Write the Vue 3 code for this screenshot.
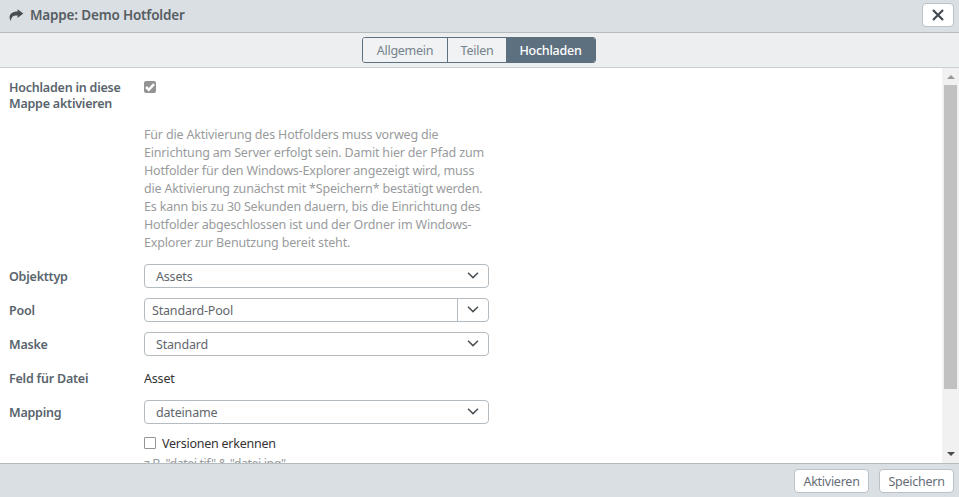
<script setup>
import { ref } from 'vue'

const tabs = ['Allgemein', 'Teilen', 'Hochladen']
const active = ref('Hochladen')
const help = [
  'Für die Aktivierung des Hotfolders muss vorweg die',
  'Einrichtung am Server erfolgt sein. Damit hier der Pfad zum',
  'Hotfolder für den Windows-Explorer angezeigt wird, muss',
  'die Aktivierung zunächst mit *Speichern* bestätigt werden.',
  'Es kann bis zu 30 Sekunden dauern, bis die Einrichtung des',
  'Hotfolder abgeschlossen ist und der Ordner im Windows-',
  'Explorer zur Benutzung bereit steht.',
]
const rows = [
  { label: 'Objekttyp', value: 'Assets', kind: 'select' },
  { label: 'Pool', value: 'Standard-Pool', kind: 'combo' },
  { label: 'Maske', value: 'Standard', kind: 'select' },
  { label: 'Feld für Datei', value: 'Asset', kind: 'text' },
  { label: 'Mapping', value: 'dateiname', kind: 'select' },
]
</script>

<template>
  <div class="dialog">
    <header class="titlebar">
      <svg class="share" width="15" height="13" viewBox="0 0 15 13">
        <path d="M8.6 0.2 L14.3 4.6 L8.6 9 V6.5 C5 6.3 2.4 7.2 1.9 12 C-1.2 7.6 1.2 2.6 8.6 2.6 Z" />
      </svg>
      <h1>Mappe: Demo Hotfolder</h1>
      <button class="close" aria-label="Schließen">
        <svg width="12" height="12" viewBox="0 0 12 12"><path d="M1 1 L11 11 M11 1 L1 11" /></svg>
      </button>
    </header>

    <nav class="tabbar">
      <div class="tabs">
        <button
          v-for="t in tabs"
          :key="t"
          :class="['tab', t.toLowerCase(), { active: t === active }]"
          @click="active = t"
        >{{ t }}</button>
      </div>
    </nav>

    <main class="body">
      <div class="form">
        <div class="row first">
          <label class="label wrap">Hochladen in diese<br />Mappe aktivieren</label>
          <span class="check on">
            <svg width="12" height="12" viewBox="0 0 12 12"><path d="M2 6 L4.8 8.8 L10 3.2" /></svg>
          </span>
        </div>
        <div class="help"><div v-for="line in help" :key="line">{{ line }}</div></div>
        <div v-for="r in rows" :key="r.label" class="row field">
          <label class="label">{{ r.label }}</label>
          <div v-if="r.kind === 'text'" class="plain">{{ r.value }}</div>
          <div v-else :class="['box', r.kind]">
            <span class="value">{{ r.value }}</span>
            <span class="arrow">
              <svg width="12" height="7" viewBox="0 0 12 7"><path d="M1 0.8 L6 5.6 L11 0.8" /></svg>
            </span>
          </div>
        </div>
        <div class="versions"><span class="check"></span><span>Versionen erkennen</span></div>
        <div class="hint">z.B. "datei.tif" &amp; "datei.jpg"</div>
      </div>
      <div class="scrollbar">
        <span class="up"></span>
        <span class="thumb"></span>
        <span class="down"></span>
      </div>
    </main>

    <footer class="footer">
      <button class="btn activate">Aktivieren</button>
      <button class="btn save">Speichern</button>
    </footer>
  </div>
</template>

<style>
body { margin: 0; overflow: hidden; }
</style>

<style scoped>
* { box-sizing: border-box; }
.dialog {
  width: 959px;
  height: 497px;
  display: flex;
  flex-direction: column;
  font-family: "Noto Sans", "Open Sans", sans-serif;
  font-size: 12.5px;
  letter-spacing: -0.18px;
  color: #333;
  background: #fff;
  white-space: nowrap;
}
button { font: inherit; letter-spacing: -0.25px; padding: 0; }
.titlebar {
  height: 33px;
  flex: none;
  display: flex;
  align-items: center;
  padding: 0 5px 2px 9px;
  background: #d9dfe2;
  border-bottom: 1px solid #b4bcc0;
}
.share { fill: #484d52; margin-right: 6px; }
h1 { margin: 0; font-size: 13.5px; font-weight: 600; letter-spacing: -0.18px; color: #565d63; }
.close {
  margin-left: auto;
  width: 32px;
  height: 24px;
  display: flex;
  align-items: center;
  justify-content: center;
  background: #fff;
  border: 1px solid #b9c2c8;
  border-radius: 4px;
}
.close path { stroke: #434951; stroke-width: 2.2; fill: none; }
.tabbar {
  height: 35px;
  flex: none;
  padding: 4px 1px 0 0;
  display: flex;
  justify-content: center;
  background: #eceef0;
  border-bottom: 1px solid #c8d0d4;
}
.tabs {
  width: 234px;
  height: 26px;
  display: flex;
  border: 1px solid #5d7080;
  border-radius: 3px;
  overflow: hidden;
}
.tab { border: 0; background: #f0f2f3; color: #75818b; }
.allgemein { width: 84px; }
.teilen { width: 59px; border-left: 1px solid #5d7080; }
.hochladen { flex: 1; }
.tab.active { background: #5d7080; color: #fff; font-weight: 500; }
.body { flex: 1; min-height: 0; display: flex; overflow: hidden; }
.form { flex: 1; padding: 11px 0 0 9px; }
.row { display: flex; }
.label { width: 135px; flex: none; color: #59646d; font-weight: 600; letter-spacing: -0.22px; }
.first { height: 47px; }
.wrap { line-height: 16px; padding-top: 1px; }
.check {
  width: 12px;
  height: 12px;
  flex: none;
  border: 1px solid #929699;
  border-radius: 1px;
  background: #fff;
}
.check.on { margin-top: 2px; border: 0; border-radius: 2px; background: #939393; display: flex; }
.check.on path { stroke: #fff; stroke-width: 2.5; fill: none; }
.help { margin-left: 135px; height: 138px; line-height: 18px; color: #999b9d; }
.field { height: 24px; margin-bottom: 10px; line-height: 26px; }
.box {
  width: 345px;
  height: 24px;
  display: flex;
  border: 1px solid #b4bcc1;
  border-radius: 4px;
  color: #5f666c;
  line-height: 24px;
}
.value { flex: 1; padding-left: 11px; }
.combo .value { padding-left: 7px; }
.arrow { width: 31px; height: 21px; display: flex; align-items: center; justify-content: center; }
.combo .arrow { height: 22px; padding-bottom: 1px; border-left: 1px solid #b4bcc1; }
.arrow path { stroke: #4b5054; stroke-width: 1.5; fill: none; }
.plain { color: #333; }
.versions {
  margin: 0 0 0 135px;
  height: 18px;
  display: flex;
  align-items: center;
  gap: 6px;
  letter-spacing: -0.25px;
}
.hint { margin: 3px 0 0 135px; line-height: 18px; letter-spacing: -0.46px; color: #999b9d; }
.scrollbar {
  width: 17px;
  flex: none;
  display: flex;
  flex-direction: column;
  align-items: center;
  background: #f1f1f1;
}
.up { margin-top: 7px; border: 4px solid transparent; border-top: 0; border-bottom-color: #999; }
.thumb { margin-top: 6px; width: 13px; height: 304px; background: #c1c1c1; }
.down { margin-top: auto; margin-bottom: 7px; border: 4px solid transparent; border-bottom: 0; border-top-color: #4b4b4b; }
.footer {
  height: 34px;
  flex: none;
  display: flex;
  justify-content: flex-end;
  gap: 10px;
  padding: 5px 5px 0 0;
  background: #d9dfe2;
  border-top: 1px solid #b4bcc0;
}
.btn {
  height: 24px;
  width: 75px;
  background: #fff;
  border: 1px solid #b9c2c8;
  border-radius: 4px;
  color: #656e76;
}
</style>
